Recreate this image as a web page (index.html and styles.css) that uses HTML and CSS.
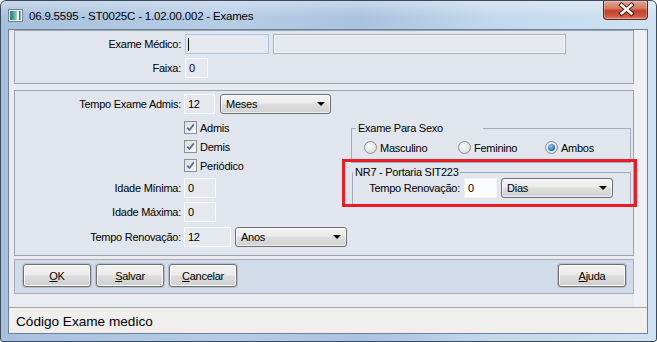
FILE: index.html
```html
<!DOCTYPE html>
<html lang="pt-BR">
<head>
  <meta charset="UTF-8" />
  <meta name="viewport" content="width=device-width, initial-scale=1.0"/>
  <title>06.9.5595 - ST0025C - 1.02.00.002 - Exames</title>
  <link rel="stylesheet" href="styles.css">
</head>
<body>
  <div class="window">
    <div class="titlebar">
      <svg class="app-icon" width="15" height="13" viewBox="0 0 15 13">
        <defs>
          <linearGradient id="iconGrad" x1="0" y1="0" x2="1" y2="0">
            <stop offset="0" stop-color="#2e7f88"/>
            <stop offset="0.5" stop-color="#4fa08c"/>
            <stop offset="1" stop-color="#a9d5c8"/>
          </linearGradient>
        </defs>
        <rect x="0.5" y="0.5" width="14" height="12" fill="#eef2f5" stroke="#71818e"/>
        <rect x="2" y="2" width="7" height="9" fill="url(#iconGrad)"/>
        <rect x="11" y="2" width="1.5" height="9" fill="#5d6c79"/>
      </svg>
      <span class="title">06.9.5595 - ST0025C - 1.02.00.002 - Exames</span>
      <div class="close-btn">
        <svg width="45" height="19" viewBox="0 0 45 19">
          <path d="M17.5 5 L27.5 13.5 M27.5 5 L17.5 13.5" stroke="#4a1d14" stroke-width="4.4" stroke-linecap="square"/>
          <path d="M17.5 5 L27.5 13.5 M27.5 5 L17.5 13.5" stroke="#ffffff" stroke-width="2.4" stroke-linecap="square"/>
        </svg>
      </div>
    </div>

    <div class="frame-body">
      <div class="client">
        <div class="main">
          <div class="content">

            <div class="panel panel-top">
              <div class="field">
                <span class="field-label">Exame Médico:</span>
                <div class="input input-focus input-code"><span class="caret"></span></div>
                <div class="input input-disabled input-desc"></div>
              </div>
              <div class="field">
                <span class="field-label">Faixa:</span>
                <div class="input input-faixa">0</div>
              </div>
            </div>

            <div class="panel panel-params">
              <div class="params-left">
                <div class="field">
                  <span class="field-label">Tempo Exame Admis:</span>
                  <div class="input input-num">12</div>
                  <div class="select select-admis">Meses</div>
                </div>
                <div class="check-row check-first">
                  <span class="check">
                    <svg width="11" height="11" viewBox="0 0 11 11"><path d="M2.3 5.6 L4.4 8 L8.8 2.4" fill="none" stroke="#4f6c9f" stroke-width="1.7"/></svg>
                  </span>
                  <span>Admis</span>
                </div>
                <div class="check-row">
                  <span class="check">
                    <svg width="11" height="11" viewBox="0 0 11 11"><path d="M2.3 5.6 L4.4 8 L8.8 2.4" fill="none" stroke="#4f6c9f" stroke-width="1.7"/></svg>
                  </span>
                  <span>Demis</span>
                </div>
                <div class="check-row">
                  <span class="check">
                    <svg width="11" height="11" viewBox="0 0 11 11"><path d="M2.3 5.6 L4.4 8 L8.8 2.4" fill="none" stroke="#4f6c9f" stroke-width="1.7"/></svg>
                  </span>
                  <span>Periódico</span>
                </div>
                <div class="field field-min">
                  <span class="field-label">Idade Mínima:</span>
                  <div class="input input-age">0</div>
                </div>
                <div class="field field-max">
                  <span class="field-label">Idade Máxima:</span>
                  <div class="input input-age">0</div>
                </div>
                <div class="field field-renew">
                  <span class="field-label">Tempo Renovação:</span>
                  <div class="input input-renew">12</div>
                  <div class="select select-renew">Anos</div>
                </div>
              </div>

              <div class="params-right">
                <fieldset class="group group-sex">
                  <legend class="legend-sex">Exame Para Sexo</legend>
                  <div class="radio-row">
                    <label class="radio-item"><span class="radio"></span>Masculino</label>
                    <label class="radio-item"><span class="radio"></span>Feminino</label>
                    <label class="radio-item"><span class="radio radio-on"></span>Ambos</label>
                  </div>
                </fieldset>
                <fieldset class="group group-nr7">
                  <legend class="legend-nr7">NR7 - Portaria SIT223</legend>
                  <div class="nr7-row">
                    <span class="nr7-label">Tempo Renovação:</span>
                    <div class="input input-white">0</div>
                    <div class="select select-days">Dias</div>
                  </div>
                </fieldset>
              </div>

              <div class="highlight"></div>
            </div>

            <div class="button-bar">
              <div class="btn"><u>O</u>K</div>
              <div class="btn"><u>S</u>alvar</div>
              <div class="btn"><u>C</u>ancelar</div>
              <div class="btn btn-help"><u>A</u>juda</div>
            </div>

          </div>
          <div class="side-strip"></div>
        </div>
        <div class="status-bar">Código Exame medico</div>
      </div>
    </div>
  </div>
</body>
</html>
```

FILE: styles.css
```css
body {
  margin: 0;
  font-family: "Liberation Sans", Arial, sans-serif;
  font-size: 11px;
  letter-spacing: -0.25px;
  color: #000;
  background: #ffffff;
}
.window {
  width: 657px;
  height: 342px;
  box-sizing: border-box;
  border: 1px solid #3b4a5c;
  border-radius: 6px 6px 3px 3px;
  background: linear-gradient(to right, #a7c0dc 0%, #b6cde6 35%, #a9c2de 55%, #c3d8ed 75%, #d0e2f2 100%);
  display: flex;
  flex-direction: column;
  overflow: hidden;
}
.titlebar {
  height: 28px;
  display: flex;
  align-items: center;
  padding-left: 7px;
  background: linear-gradient(to bottom, rgba(255,255,255,0.35), rgba(255,255,255,0) 60%);
}
.app-icon {
  margin-right: 6px;
  margin-top: 1px;
}
.title {
  font-size: 11.5px;
  letter-spacing: -0.2px;
  margin-top: 1px;
}
.close-btn {
  margin-left: auto;
  margin-right: 8px;
  align-self: flex-start;
  width: 45px;
  height: 19px;
  box-sizing: border-box;
  border: 1px solid #5a2a22;
  border-top: none;
  border-radius: 0 0 4px 4px;
  background: linear-gradient(to bottom, #e6a595 0%, #d77a63 40%, #c2412a 55%, #cf5a40 85%, #e2856a 100%);
  box-shadow: inset 0 0 0 1px rgba(255,255,255,0.25);
}
.close-btn svg {
  display: block;
  margin-top: -1px;
}
.frame-body {
  flex: 1;
  padding: 0 8px 7px 7px;
  display: flex;
}
.client {
  flex: 1;
  border: 1px solid #6f8197;
  background: #e9ebf0;
  display: flex;
  flex-direction: column;
}
.main {
  height: 277px;
  display: flex;
}
.content {
  width: 620px;
  padding-left: 5px;
}
.side-strip {
  flex: 1;
  background: #eef0f3;
}
.status-bar {
  flex: 1;
  border-top: 1px solid #a5a5a5;
  background: #f0efee;
  font-size: 13.6px;
  letter-spacing: 0;
  padding: 1px 0 0 7px;
  display: flex;
  align-items: center;
}

/* panels */
.panel {
  box-sizing: border-box;
  border: 1px solid #99a3b1;
  background: #e1e5ed;
}
.panel-top {
  height: 54px;
  padding-top: 3px;
  display: flex;
  flex-direction: column;
  gap: 4px;
}
.panel-params {
  height: 166px;
  margin-top: 6px;
  display: flex;
  position: relative;
}
.params-left {
  width: 336px;
  padding-top: 3px;
}
.params-right {
  width: 280px;
}

.field {
  display: flex;
  align-items: center;
  height: 20px;
}
.field-label {
  width: 166px;
  text-align: right;
  margin-right: 3px;
  flex-shrink: 0;
}
.field-min { margin-top: 3px; }
.field-max { margin-top: 4px; }
.field-renew { margin-top: 5px; }

.input {
  box-sizing: border-box;
  height: 20px;
  border: 1px solid #fafbfc;
  background: #e5e8ef;
  padding-left: 3px;
  display: flex;
  align-items: center;
  position: relative;
}
.input-focus {
  border-color: #a9c6e4;
}
.caret {
  width: 1px;
  height: 13px;
  background: #000;
  margin-left: -1px;
}
.input-disabled {
  border-color: #b0b0b0;
  box-shadow: inset 0 0 0 1px #f6f7f9;
}
.input-code { width: 84px; margin-left: 1px; }
.input-desc { width: 293px; margin-left: 4px; }
.input-faixa { width: 23px; margin-left: 1px; }
.input-num { width: 31px; }
.input-age { width: 32px; }
.input-renew { width: 47px; }
.input-white {
  width: 33px;
  background: #fbfcfd;
  border-color: #f2f4f7;
}

.select {
  box-sizing: border-box;
  height: 20px;
  border: 1px solid #707070;
  border-radius: 3px;
  background: linear-gradient(to bottom, #f3f3f3 0%, #ebebeb 45%, #dddddd 50%, #d2d2d2 100%);
  box-shadow: inset 0 0 0 1px rgba(255,255,255,0.6);
  display: flex;
  align-items: center;
  padding-left: 5px;
}
.select::after {
  content: "";
  margin-left: auto;
  margin-right: 5px;
  border-left: 4px solid transparent;
  border-right: 4px solid transparent;
  border-top: 4px solid #000;
}
.select-admis { width: 111px; margin-left: 5px; }
.select-renew { width: 112px; margin-left: 4px; }
.select-days { width: 112px; margin-left: 4px; }

/* checkboxes */
.check-row {
  height: 19px;
  display: flex;
  align-items: center;
  padding-left: 169px;
}
.check-first { margin-top: 4px; }
.check {
  width: 13px;
  height: 13px;
  box-sizing: border-box;
  border: 1px solid #8e8f8f;
  background: linear-gradient(135deg, #d9dde4, #f7f8fa);
  margin-right: 3px;
  display: flex;
  align-items: center;
  justify-content: center;
}
.check svg { display: block; }

/* group boxes */
.group {
  margin: 0;
  padding: 0;
  min-width: 0;
  box-sizing: border-box;
  border: 1px solid #a3acb8;
}
.group legend {
  line-height: 11px;
  font-size: 11px;
}
.group-sex {
  height: 40px;
  margin-top: 32px;
}
.legend-sex {
  margin-left: 4px;
  padding: 0 40px 0 2px;
}
.group-nr7 {
  height: 40px;
  margin-top: 4px;
  margin-left: 1px;
  width: 279px;
}
.legend-nr7 {
  margin-left: 0;
  padding: 0 1px 0 2px;
}
.radio-row {
  display: grid;
  grid-template-columns: 94px 87px auto;
  padding: 7px 0 0 12px;
}
.radio-item {
  display: flex;
  align-items: center;
  height: 13px;
}
.radio {
  width: 13px;
  height: 13px;
  box-sizing: border-box;
  border-radius: 50%;
  border: 1px solid #8c8c8c;
  background: radial-gradient(circle at 40% 35%, #fbfbfb, #d4d4d4);
  margin-right: 3px;
  display: flex;
  align-items: center;
  justify-content: center;
}
.radio-on::after {
  content: "";
  width: 7px;
  height: 7px;
  border-radius: 50%;
  background: radial-gradient(circle at 40% 35%, #8fd0f7, #1d5fa6 75%);
}
.nr7-row {
  display: flex;
  align-items: center;
  height: 20px;
  padding-left: 15px;
}
.nr7-label {
  width: 92px;
  text-align: right;
  white-space: nowrap;
  margin-right: 4px;
}

.highlight {
  position: absolute;
  left: 327px;
  top: 68px;
  width: 295px;
  height: 48px;
  box-sizing: border-box;
  border: 3px solid #e41f27;
  pointer-events: none;
}

/* buttons */
.button-bar {
  box-sizing: border-box;
  height: 35px;
  margin-top: 3px;
  border: 1px solid #a6aebb;
  background: #d1dbea;
  display: flex;
  align-items: flex-start;
  gap: 5px;
  padding: 4px 7px 0 8px;
}
.btn {
  box-sizing: border-box;
  width: 68px;
  height: 23px;
  border: 1px solid #707070;
  border-radius: 3px;
  background: linear-gradient(to bottom, #f2f2f2 0%, #ebebeb 48%, #dddddd 52%, #cfcfcf 100%);
  box-shadow: inset 0 0 0 1px #fbfbfb, 0 0 0 1px #b8bec8;
  display: flex;
  align-items: center;
  justify-content: center;
}
.btn-help {
  margin-left: auto;
}
```
